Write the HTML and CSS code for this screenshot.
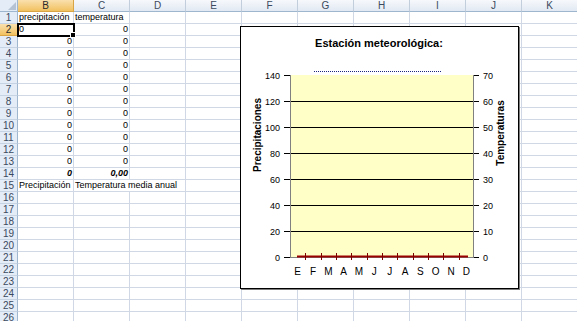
FILE: index.html
```html
<!DOCTYPE html>
<html lang="es">
<head>
    <meta charset="UTF-8">
    <meta name="viewport" content="width=device-width, initial-scale=1.0">
    <link rel="stylesheet" href="styles.css">
    <title>Estación meteorológica</title>
</head>
<body>
    <div class="page">
        <div class="sheet" id="sheet"></div>

        <div class="chart">
            <svg class="chart-svg" width="277" height="261" viewBox="0 0 277 261">
                <text class="chart-title" x="138" y="20" text-anchor="middle">Estación meteorológica:</text>

                <!-- plot area -->
                <rect x="49" y="48" width="184" height="182" fill="#ffffc8"/>
                <line x1="73" y1="44.5" x2="201" y2="44.5" stroke="#1a237e" stroke-dasharray="1 1"/>

                <g stroke="#000" stroke-width="1">
                    <line x1="49" y1="74.5" x2="233" y2="74.5"/>
                    <line x1="49" y1="100.5" x2="233" y2="100.5"/>
                    <line x1="49" y1="126.5" x2="233" y2="126.5"/>
                    <line x1="49" y1="152.5" x2="233" y2="152.5"/>
                    <line x1="49" y1="178.5" x2="233" y2="178.5"/>
                    <line x1="49" y1="204.5" x2="233" y2="204.5"/>
                </g>

                <!-- axes -->
                <g stroke="#808080" stroke-width="1">
                    <line x1="49.5" y1="48" x2="49.5" y2="231"/>
                    <line x1="232.5" y1="48" x2="232.5" y2="231"/>
                    <line x1="49" y1="230.5" x2="233" y2="230.5"/>
                </g>
                <g stroke="#000" stroke-width="1" id="ticks"></g>

                <line x1="56" y1="229.5" x2="227" y2="229.5" stroke="#9a0000" stroke-width="2"/>
                <g stroke="#7a0000" stroke-width="1" id="xticks"></g>

                <g class="axis-label" id="labels"></g>

                <text class="axis-title" transform="translate(20 108) rotate(-90)" text-anchor="middle">Precipitaciones</text>
                <text class="axis-title" transform="translate(263 106) rotate(-90)" text-anchor="middle">Temperaturas</text>
            </svg>
        </div>
    </div>

    <script>
        const cols = ['B', 'C', 'D', 'E', 'F', 'G', 'H', 'I', 'J', 'K'];

        // cell contents: row -> {col: [text, class]}
        const data = {
            1: { B: ['precipitación', 'left'], C: ['temperatura', 'left'] },
            2: { B: ['0', 'left active'], C: ['0', 'num'] },
            14: { B: ['0', 'num strong'], C: ['0,00', 'num strong'] },
            15: { B: ['Precipitación', 'left'], C: ['Temperatura media anual', 'left wide'] }
        };
        for (let r = 3; r <= 13; r++) {
            data[r] = { B: ['0', 'num'], C: ['0', 'num'] };
        }

        const sheet = document.getElementById('sheet');
        let html = '<div class="corner"></div>';
        cols.forEach(c => {
            html += '<div class="col-head' + (c === 'B' ? ' selected' : '') + '">' + c + '</div>';
        });

        for (let r = 1; r <= 26; r++) {
            html += '<div class="row-head' + (r === 2 ? ' selected' : '') + '">' + r + '</div>';
            const row = data[r] || {};
            let skip = false;
            cols.forEach(c => {
                if (skip) { skip = false; return; }
                const cell = row[c];
                if (cell) {
                    if (cell[1].includes('wide')) skip = true;
                    html += '<div class="cell ' + cell[1] + '">' + cell[0] + '</div>';
                } else {
                    html += '<div class="cell"></div>';
                }
            });
        }
        sheet.innerHTML = html;

        // chart axis ticks and labels
        let ticks = '';
        let labels = '';
        for (let i = 0; i <= 7; i++) {
            const y = 48 + i * 26;
            ticks += '<line x1="43" y1="' + (y + 0.5) + '" x2="49" y2="' + (y + 0.5) + '"/>';
            ticks += '<line x1="233" y1="' + (y + 0.5) + '" x2="238" y2="' + (y + 0.5) + '"/>';
            labels += '<text x="39" y="' + (y + 3.5) + '" text-anchor="end">' + (140 - i * 20) + '</text>';
            labels += '<text x="242" y="' + (y + 3.5) + '">' + (70 - i * 10) + '</text>';
        }
        const months = ['E', 'F', 'M', 'A', 'M', 'J', 'J', 'A', 'S', 'O', 'N', 'D'];
        const step = 184 / 12;
        let xt = '';
        months.forEach((m, i) => {
            const cx = 49 + step / 2 + i * step;
            labels += '<text x="' + cx.toFixed(1) + '" y="248" text-anchor="middle" class="month">' + m + '</text>';
            if (i > 0) {
                const x = Math.round(49 + i * step) + 0.5;
                xt += '<line x1="' + x + '" y1="226" x2="' + x + '" y2="233"/>';
            }
        });
        document.getElementById('ticks').innerHTML = ticks;
        document.getElementById('xticks').innerHTML = xt;
        document.getElementById('labels').innerHTML = labels;
    </script>
</body>
</html>
```

FILE: styles.css
```css
body {
    margin: 0;
    background: #fff;
    overflow: hidden;
    font-family: "Liberation Sans", Arial, sans-serif;
}

.page {
    position: relative;
    width: 577px;
    height: 321px;
    overflow: hidden;
}

.sheet {
    display: grid;
    grid-template-columns: 18px repeat(10, 56px);
    grid-template-rows: 12px;
    grid-auto-rows: 12px;
    font-size: 9px;
    line-height: 11px;
    color: #000;
}

.corner {
    position: relative;
    background: #e4ecf7;
    border-right: 1px solid #9eb6ce;
    border-bottom: 1px solid #9eb6ce;
}

.corner::after {
    content: "";
    position: absolute;
    right: 1px;
    bottom: 1px;
    border-left: 8px solid transparent;
    border-bottom: 8px solid #b4c2d4;
}

.col-head {
    background: linear-gradient(#f6f8fb, #e2e9f3);
    border-right: 1px solid #c2cedc;
    border-bottom: 1px solid #9eb6ce;
    text-align: center;
    font-size: 10px;
    color: #3b4a5e;
}

.row-head {
    background: #e4ecf7;
    border-right: 1px solid #9eb6ce;
    border-bottom: 1px solid #c6d3e2;
    text-align: center;
    font-size: 10px;
    color: #3b4a5e;
}

.col-head.selected,
.row-head.selected {
    background: linear-gradient(#fae0ae, #f1c15f);
    border-color: #d9a544;
    color: #2a2a2a;
}

.cell {
    border-right: 1px solid #d0d7e5;
    border-bottom: 1px solid #d0d7e5;
    padding: 0 1px;
    white-space: nowrap;
    overflow: visible;
}

.cell.num {
    text-align: right;
}

.cell.left {
    text-align: left;
}

.cell.strong {
    font-weight: bold;
    font-style: italic;
}

.cell.wide {
    grid-column: span 2;
}

.cell.active {
    position: relative;
    outline: 2px solid #000;
    outline-offset: -1px;
}

.cell.active::after {
    content: "";
    position: absolute;
    right: -3px;
    bottom: -3px;
    width: 4px;
    height: 4px;
    background: #000;
    border: 1px solid #fff;
}

.chart {
    position: absolute;
    left: 240px;
    top: 26px;
    width: 279px;
    height: 263px;
    box-sizing: border-box;
    border: 1px solid #000;
    background: #fff;
    box-shadow: 1px 1px 0 #7d7d7d;
}

.chart-svg {
    display: block;
    font-family: "Liberation Sans", Arial, sans-serif;
}

.chart-title {
    font-size: 11px;
    font-weight: bold;
    fill: #000;
}

.axis-label text {
    font-size: 9px;
    fill: #000;
}

.axis-label text.month {
    font-size: 10px;
}

.axis-title {
    font-size: 10px;
    font-weight: bold;
    fill: #000;
}
```
